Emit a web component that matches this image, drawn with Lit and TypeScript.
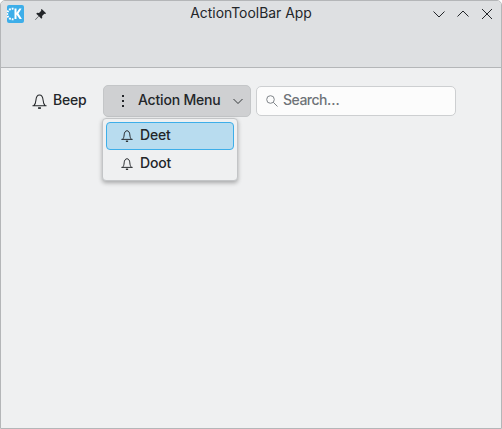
import { LitElement, css, html, svg } from "lit";
import { customElement } from "lit/decorators.js";

const bell = (size: number) => html`<svg class="bell" width=${size} height=${size} viewBox="0 0 16 16" fill="none" stroke="#232629" stroke-width=${size < 15 ? 1.3 : 1.1}>
  ${svg`<path d="M.5 12.500h15M2 12.500C3.500 11 4 9 4.200 6.500 4.400 3.200 5.900 1 8 1s3.600 2.200 3.800 5.500C12 9 12.500 11 14 12.500"/>
  <path d="M6.500 15h3" stroke-width="1.800"/>`}
</svg>`;

@customElement("app-root")
export class AppRoot extends LitElement {
  static styles = css`
    :host {
      display: block;
      width: 502px;
      height: 429px;
      font-family: Inter, "Noto Sans", sans-serif;
      font-size: 14px;
      color: #232629;
    }
    .window {
      box-sizing: border-box;
      height: 429px;
      display: flex;
      flex-direction: column;
      background: #eff0f1;
      border: 1px solid #b4b6b8;
      border-radius: 5px 5px 0 0;
    }
    .titlebar {
      height: 67px;
      flex: none;
      box-sizing: border-box;
      background: #dee0e2;
      border-bottom: 1px solid #b4b6b8;
      border-radius: 4px 4px 0 0;
      display: grid;
      grid-template-columns: 1fr auto 1fr;
      align-items: start;
      padding: 4px 6px 0 6px;
    }
    .left {
      display: flex;
      align-items: center;
      gap: 10px;
    }
    .logo {
      width: 17px;
      height: 18px;
      display: block;
    }
    .title {
      font-size: 13.9px;
      line-height: 16px;
    }
    .controls {
      display: flex;
      justify-content: flex-end;
      gap: 8px;
      margin-top: 1px;
    }
    .toolbar {
      position: relative;
      display: flex;
      align-items: center;
      padding: 17px 0 0 23px;
    }
    .beep {
      display: flex;
      align-items: center;
      gap: 6px;
      padding: 0 8px;
      height: 32px;
      box-sizing: border-box;
      width: 79px;
    }
    .bell {
      display: block;
      flex: none;
    }
    .text {
      font-weight: 500;
      letter-spacing: -0.2px;
      line-height: 16px;
      padding-bottom: 2px;
    }
    .menu-button {
      box-sizing: border-box;
      width: 148px;
      height: 32px;
      background: #cfd0d2;
      border: 1px solid #c4c6c8;
      border-radius: 5px;
      display: flex;
      align-items: center;
      padding: 0 7px 0 11px;
      margin-right: 5px;
    }
    .menu-button .text {
      margin-left: 7px;
      flex: 1;
    }
    .search {
      box-sizing: border-box;
      width: 200px;
      height: 30px;
      background: #fcfcfc;
      border: 1px solid #cdcfd1;
      border-radius: 5px;
      display: flex;
      align-items: center;
      gap: 5px;
      padding-left: 9px;
      color: #6e7378;
    }
    .search .text {
      letter-spacing: -0.5px;
    }
    .dropdown {
      position: absolute;
      left: 101px;
      top: 50px;
      box-sizing: border-box;
      width: 136px;
      height: 63px;
      background: #eff0f1;
      border: 1px solid #c3c5c7;
      border-radius: 4px;
      box-shadow: 0 2px 4px rgba(0, 0, 0, 0.3);
      padding: 3px;
    }
    .item {
      box-sizing: border-box;
      height: 28px;
      display: flex;
      align-items: center;
      gap: 7px;
      padding-left: 14px;
      border: 1px solid transparent;
      border-radius: 4px;
    }
    .item.active {
      background: #b8dcef;
      border-color: #3daee9;
    }
  `;

  render() {
    return html`
      <div class="window">
        <div class="titlebar">
          <div class="left">
            <svg class="logo" viewBox="0 0 17 18">
              <rect width="17" height="18" rx="2" fill="#3daee9" />
              <path d="M6.500 3.800a5.300 5.300 0 1 0 0 10.400" fill="none" stroke="#fff" stroke-width="2" stroke-dasharray="1.800 1" />
              <path d="M7.500 3.500h2v4.300L12.400 3.500h2.200L11.500 8.400l3.400 5.600h-2.300L9.500 9.500V14h-2z" fill="#fff" />
            </svg>
            <svg width="13" height="13" viewBox="0 0 14 14" fill="#232629">
              <path d="M8.300 1l4.700 4.700-1 .8-.9-.3-2.400 2.400.2 2-1 1L5.300 9 2 12.500 1 13l.5-1L5 8.700 2.400 6.100l1-1 2 .2L7.800 2.900l-.3-.9z" />
            </svg>
          </div>
          <div class="title">ActionToolBar App</div>
          <div class="controls">
            <svg width="16" height="16" viewBox="0 0 16 16" fill="none" stroke="#232629"><path d="M2.500 5.500L8 11l5.500-5.500" /></svg>
            <svg width="16" height="16" viewBox="0 0 16 16" fill="none" stroke="#232629"><path d="M2.500 10.500L8 5l5.500 5.500" /></svg>
            <svg width="16" height="16" viewBox="0 0 16 16" fill="none" stroke="#232629"><path d="M3 3l10 10M13 3L3 13" /></svg>
          </div>
        </div>
        <div class="toolbar">
          <div class="beep">${bell(15)}<span class="text">Beep</span></div>
          <div class="menu-button">
            <svg width="16" height="16" viewBox="0 0 16 16" fill="#232629">
              <rect x="7" y="2" width="2" height="2" /><rect x="7" y="7" width="2" height="2" /><rect x="7" y="12" width="2" height="2" />
            </svg>
            <span class="text">Action Menu</span>
            <svg width="10" height="10" viewBox="0 0 10 10" fill="none" stroke="#232629" stroke-width=".9"><path d="M.5 3L5 7.500 9.500 3" /></svg>
          </div>
          <div class="search">
            <svg width="12" height="12" viewBox="0 0 12 12" fill="none" stroke="#7f8489"><circle cx="4.500" cy="4.500" r="3.800" /><path d="M7.300 7.300L11.500 11.500" /></svg>
            <span class="text">Search…</span>
          </div>
          <div class="dropdown">
            <div class="item active">${bell(12)}<span class="text">Deet</span></div>
            <div class="item">${bell(12)}<span class="text">Doot</span></div>
          </div>
        </div>
      </div>
    `;
  }
}
